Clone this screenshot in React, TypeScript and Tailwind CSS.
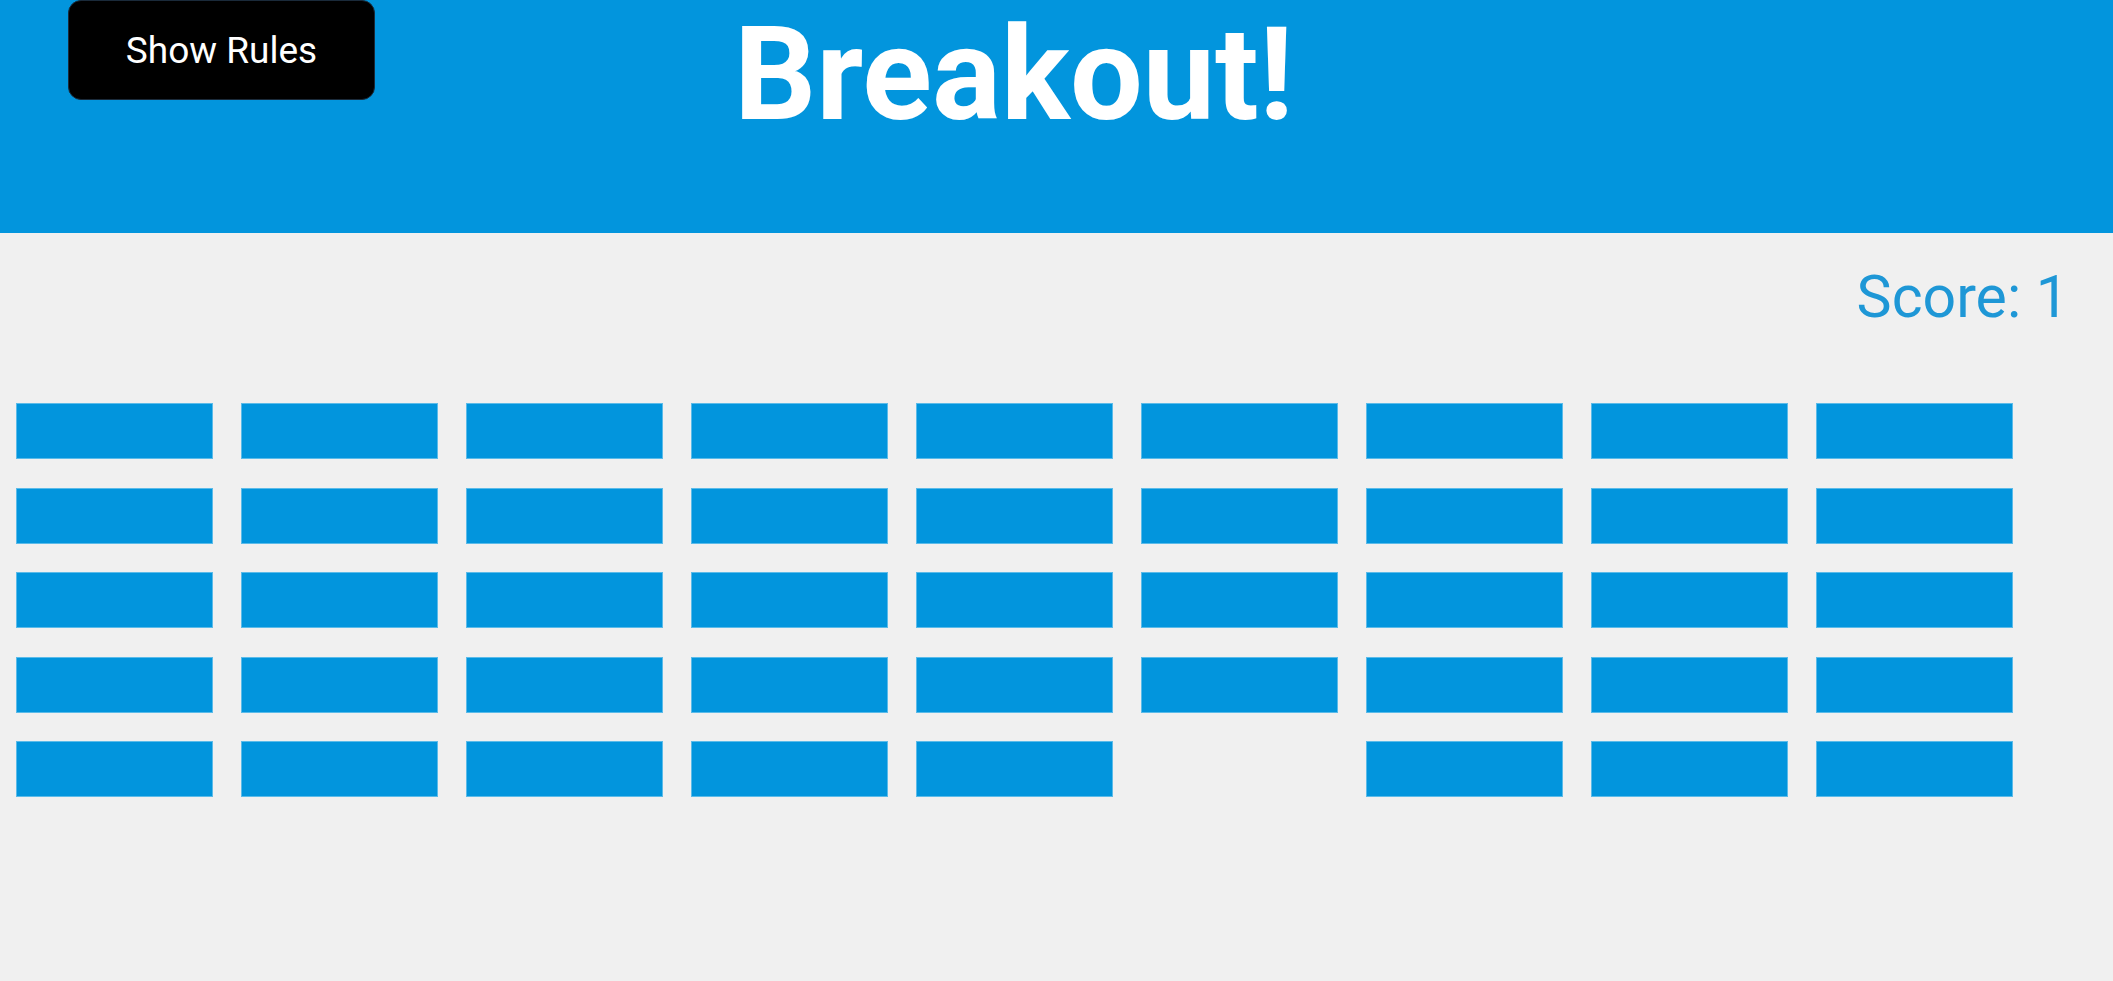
import React from "react";

const ROWS = 5;
const COLS = 9;

export default function App() {
  const bricks: { r: number; c: number; visible: boolean }[] = [];
  for (let r = 0; r < ROWS; r++) {
    for (let c = 0; c < COLS; c++) {
      bricks.push({ r, c, visible: !(r === 4 && c === 5) });
    }
  }
  return (
    <div
      className="w-[2113px] h-[981px] bg-[#f0f0f0] overflow-hidden"
      style={{ fontFamily: "Roboto, 'Liberation Sans', sans-serif" }}
    >
      <header className="h-[233px] bg-[#0295dd] flex items-start">
        <button className="ml-[68px] w-[307px] h-[100px] shrink-0 rounded-[13px] bg-black text-white text-[37px] leading-none flex items-center justify-center border border-[#1a2a3a]">
          Show Rules
        </button>
        <h1 className="ml-[359px] mt-[10px] text-[129px] leading-none font-bold text-white">
          Breakout!
        </h1>
      </header>
      <div className="flex justify-end pr-[44px] pt-[34px]">
        <div className="text-[59px] leading-none text-[#1e97d6]">Score: 1</div>
      </div>
      <div className="pl-[16px] mt-[77px] grid grid-cols-[repeat(9,197px)] gap-x-[28px] gap-y-[28.5px]">
        {bricks.map((b) => (
          <div
            key={`${b.r}-${b.c}`}
            className={
              b.visible
                ? "h-[56px] bg-[#0295dd] border border-[#5bbbe9]"
                : "h-[56px]"
            }
          />
        ))}
      </div>
    </div>
  );
}
